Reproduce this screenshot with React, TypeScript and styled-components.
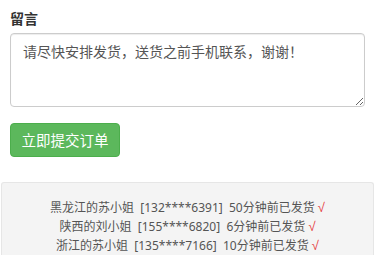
import React from "react";
import styled, { createGlobalStyle } from "styled-components";

const GlobalStyle = createGlobalStyle`
  html, body {
    margin: 0;
    padding: 0;
    background: #fff;
  }
  body {
    font-family: "Noto Sans", "Noto Sans CJK SC", sans-serif;
    font-size: 14px;
    color: #333;
  }
  * {
    box-sizing: border-box;
  }
`;

const Page = styled.div`
  width: 375px;
  height: 257px;
  overflow: hidden;
`;

const Form = styled.div`
  padding: 9px 10px 0;
`;

const Label = styled.div`
  font-weight: bold;
  font-size: 14px;
  line-height: 20px;
  color: #333;
  margin-bottom: 4px;
`;

const Message = styled.textarea`
  display: block;
  width: 355px;
  height: 74px;
  padding: 8px 12px;
  font-family: "Noto Sans", "Noto Sans CJK SC", sans-serif;
  font-size: 14px;
  line-height: 20px;
  color: #555;
  border: 1px solid #ccc;
  border-radius: 4px;
  box-shadow: inset 0 1px 1px rgba(0, 0, 0, 0.075);
  resize: vertical;
  outline: none;
`;

const SubmitButton = styled.button`
  display: block;
  margin-top: 16px;
  width: 110px;
  height: 34px;
  padding: 6px 0;
  font-family: "Noto Sans", "Noto Sans CJK SC", sans-serif;
  font-size: 14.5px;
  line-height: 20px;
  white-space: nowrap;
  text-align: center;
  color: #fff;
  background: #5cb85c;
  border: 1px solid #4cae4c;
  border-radius: 4px;
  cursor: pointer;
`;

const ShipList = styled.div`
  margin: 25px 1px 0;
  padding: 15px 0 0;
  background: #f4f4f4;
  border: 1px solid #e6e6e6;
  border-bottom: none;
  border-radius: 3px 3px 0 0;
  text-align: center;
`;

const ShipRow = styled.div`
  font-size: 12px;
  line-height: 19px;
  color: #555;
  white-space: pre;
`;

const Tick = styled.span`
  font-family: "Liberation Sans", sans-serif;
  font-size: 13px;
  color: #e4393c;
`;

const orders = [
  { name: "黑龙江的苏小姐", phone: "132****6391", time: "50分钟前已发货" },
  { name: "陕西的刘小姐", phone: "155****6820", time: "6分钟前已发货" },
  { name: "浙江的苏小姐", phone: "135****7166", time: "10分钟前已发货" },
];

export default function App() {
  return (
    <Page>
      <GlobalStyle />
      <Form>
        <Label>留言</Label>
        <Message defaultValue="请尽快安排发货，送货之前手机联系，谢谢！" />
        <SubmitButton>立即提交订单</SubmitButton>
      </Form>
      <ShipList>
        {orders.map((o) => (
          <ShipRow key={o.phone}>
            {o.name}  [{o.phone}]  {o.time} <Tick>√</Tick>
          </ShipRow>
        ))}
      </ShipList>
    </Page>
  );
}
